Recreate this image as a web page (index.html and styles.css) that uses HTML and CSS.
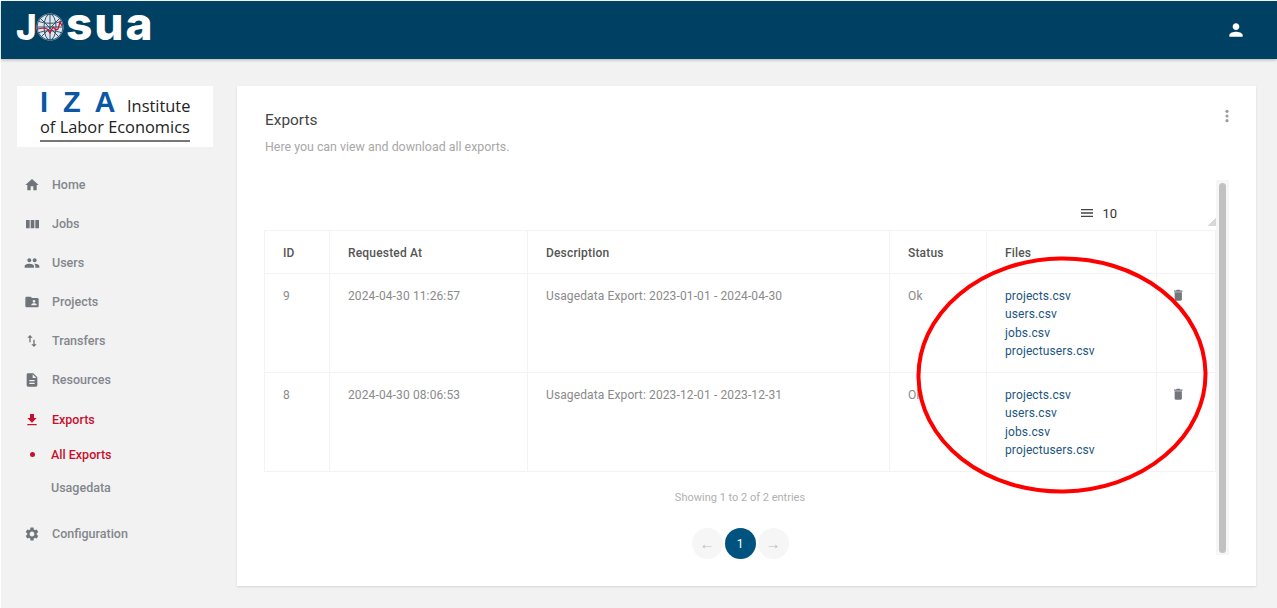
FILE: index.html
```html
<!DOCTYPE html>
<html lang="en">
<head>
<meta charset="utf-8">
<title>Exports</title>
<link rel="stylesheet" href="styles.css">
</head>
<body>
<header class="topbar">
  <div class="brand">
    <span class="brand-j">J</span>
    <svg class="globe" viewBox="0 0 28 28" fill="none">
      <circle cx="14" cy="14" r="13.5" fill="#dfe6eb"/>
      <g stroke="#2f5570" stroke-width="1">
        <circle cx="14" cy="14" r="13"/>
        <ellipse cx="14" cy="14" rx="6" ry="13"/>
        <path d="M14 1v26M2 8c7 3 17 3 24 0M1 14h26M2 20c7-3 17-3 24 0"/>
        <path d="M4 5l19 19M24 5L5 24"/>
      </g>
      <path d="M1 16l7-1 3 1 3 4 3-6 3 3 2-1 2-7 2 4" stroke="#c8102e" stroke-width="1.2"/>
    </svg>
    <span class="brand-rest">sua</span>
  </div>
  <svg class="user-icon" viewBox="0 0 24 24"><path d="M12 12c2.21 0 4-1.79 4-4s-1.79-4-4-4-4 1.79-4 4 1.79 4 4 4zm0 2c-2.67 0-8 1.34-8 4v2h16v-2c0-2.66-5.33-4-8-4z"/></svg>
</header>

<div class="layout">
  <aside class="sidebar">
    <div class="iza">
      <div class="iza-top"><span class="iza-mark">I Z A</span><span class="iza-word">Institute</span></div>
      <div class="iza-word iza-second">of Labor Economics</div>
      <div class="iza-rule"></div>
    </div>
    <nav class="nav">
      <a class="nav-item"><svg viewBox="0 0 24 24"><path d="M10 20v-6h4v6h5v-8h3L12 3 2 12h3v8z"/></svg>Home</a>
      <a class="nav-item"><svg viewBox="0 0 24 24"><path d="M3 6h5.5v12.5H3zM10 6h5.5v12.5H10zM17 6h5.5v12.5H17z"/></svg>Jobs</a>
      <a class="nav-item"><svg viewBox="0 0 24 24"><path d="M16 11c1.66 0 2.99-1.34 2.99-3S17.66 5 16 5c-1.66 0-3 1.34-3 3s1.34 3 3 3zm-8 0c1.66 0 2.99-1.34 2.99-3S9.66 5 8 5C6.34 5 5 6.34 5 8s1.34 3 3 3zm0 2c-2.33 0-7 1.17-7 3.5V19h14v-2.5c0-2.33-4.67-3.5-7-3.5zm8 0c-.29 0-.62.02-.97.05 1.16.84 1.97 1.97 1.97 3.45V19h6v-2.5c0-2.33-4.67-3.5-7-3.5z"/></svg>Users</a>
      <a class="nav-item"><svg viewBox="0 0 24 24"><path d="M20 6h-8l-2-2H4c-1.1 0-1.99.9-1.99 2L2 18c0 1.1.9 2 2 2h16c1.1 0 2-.9 2-2V8c0-1.1-.9-2-2-2zm-5 3c1.1 0 2 .9 2 2s-.9 2-2 2-2-.9-2-2 .9-2 2-2zm4 8h-8v-1c0-1.33 2.67-2 4-2s4 .67 4 2v1z"/></svg>Projects</a>
      <a class="nav-item"><svg viewBox="0 0 24 24"><path d="M16 17.01V10h-2v7.01h-3L15 21l4-3.99h-3zM9 3L5 6.99h3V14h2V6.99h3L9 3z"/></svg>Transfers</a>
      <a class="nav-item"><svg viewBox="0 0 24 24"><path d="M14 2H6c-1.1 0-1.99.9-1.99 2L4 20c0 1.1.89 2 1.99 2H18c1.1 0 2-.9 2-2V8l-6-6zm2 16H8v-2h8v2zm0-4H8v-2h8v2zm-3-5V3.5L18.5 9H13z"/></svg>Resources</a>
      <a class="nav-item is-active"><svg viewBox="0 0 24 24"><path d="M19 9h-4V3H9v6H5l7 7 7-7zM5 18v2h14v-2H5z"/></svg>Exports</a>
      <div class="subnav">
        <a class="sub-item is-active"><span class="dot"></span>All Exports</a>
        <a class="sub-item">Usagedata</a>
      </div>
      <a class="nav-item"><svg viewBox="0 0 24 24"><path d="M19.14 12.94c.04-.3.06-.61.06-.94 0-.32-.02-.64-.07-.94l2.03-1.58c.18-.14.23-.41.12-.61l-1.92-3.32c-.12-.22-.37-.29-.59-.22l-2.39.96c-.5-.38-1.03-.7-1.62-.94l-.36-2.54c-.04-.24-.24-.41-.48-.41h-3.84c-.24 0-.43.17-.47.41l-.36 2.54c-.59.24-1.13.57-1.62.94l-2.39-.96c-.22-.08-.47 0-.59.22L2.74 8.87c-.12.21-.08.47.12.61l2.03 1.58c-.05.3-.09.63-.09.94s.02.64.07.94l-2.03 1.58c-.18.14-.23.41-.12.61l1.92 3.32c.12.22.37.29.59.22l2.39-.96c.5.38 1.03.7 1.62.94l.36 2.54c.05.24.24.41.48.41h3.84c.24 0 .44-.17.47-.41l.36-2.54c.59-.24 1.13-.56 1.62-.94l2.39.96c.22.08.47 0 .59-.22l1.92-3.32c.12-.22.07-.47-.12-.61l-2.01-1.58zM12 15.6c-1.98 0-3.6-1.62-3.6-3.6s1.62-3.6 3.6-3.6 3.6 1.62 3.6 3.6-1.62 3.6-3.6 3.6z"/></svg>Configuration</a>
    </nav>
  </aside>

  <main class="card">
    <div class="card-head">
      <div>
        <h1 class="card-title">Exports</h1>
        <p class="card-sub">Here you can view and download all exports.</p>
      </div>
      <svg class="kebab" viewBox="0 0 24 24"><circle cx="12" cy="5" r="2.4"/><circle cx="12" cy="12" r="2.4"/><circle cx="12" cy="19" r="2.4"/></svg>
    </div>
    <div class="scroll">
      <div class="scroll-body">
        <div class="toolbar">
          <svg class="menu-icon" viewBox="0 0 24 24"><path d="M3 18h18v-2H3v2zm0-5h18v-2H3v2zm0-7v2h18V6H3z"/></svg>
          <span class="per-page">10</span>
          <span class="resizer"></span>
        </div>
        <table class="grid">
          <thead>
            <tr>
              <th class="c-id">ID</th>
              <th class="c-req">Requested At</th>
              <th class="c-desc">Description</th>
              <th class="c-status">Status</th>
              <th class="c-files">Files</th>
              <th class="c-act"></th>
            </tr>
          </thead>
          <tbody>
            <tr>
              <td>9</td>
              <td>2024-04-30 11:26:57</td>
              <td>Usagedata Export: 2023-01-01 - 2024-04-30</td>
              <td>Ok</td>
              <td><a>projects.csv</a><a>users.csv</a><a>jobs.csv</a><a>projectusers.csv</a></td>
              <td><svg class="trash" viewBox="0 0 24 24"><path d="M6 19c0 1.1.9 2 2 2h8c1.1 0 2-.9 2-2V7H6v12zM19 4h-3.5l-1-1h-5l-1 1H5v2h14V4z"/></svg></td>
            </tr>
            <tr>
              <td>8</td>
              <td>2024-04-30 08:06:53</td>
              <td>Usagedata Export: 2023-12-01 - 2023-12-31</td>
              <td>Ok</td>
              <td><a>projects.csv</a><a>users.csv</a><a>jobs.csv</a><a>projectusers.csv</a></td>
              <td><svg class="trash" viewBox="0 0 24 24"><path d="M6 19c0 1.1.9 2 2 2h8c1.1 0 2-.9 2-2V7H6v12zM19 4h-3.5l-1-1h-5l-1 1H5v2h14V4z"/></svg></td>
            </tr>
          </tbody>
        </table>
        <p class="info">Showing 1 to 2 of 2 entries</p>
        <div class="pager">
          <span class="page-btn">←</span>
          <span class="page-btn is-current">1</span>
          <span class="page-btn">→</span>
        </div>
      </div>
      <div class="scrollbar"><div class="thumb"></div></div>
    </div>
  </main>
</div>

<svg class="annotation" viewBox="0 0 300 246" fill="none"><ellipse cx="150" cy="123" rx="143.5" ry="116.5" stroke="#f00" stroke-width="4" transform="rotate(-1 150 123)"/></svg>
</body>
</html>
```
FILE: styles.css
```css
* { box-sizing: border-box; }
html, body { height: 100%; }
body {
  margin: 0;
  padding: 1px 0 0 1px;
  height: 608px;
  overflow: hidden;
  background: #fff;
  font-family: Roboto, "Liberation Sans", sans-serif;
  font-size: 12px;
  color: #8a8a8a;
  position: relative;
}
a { display: block; }

.topbar {
  height: 58px;
  background: #004063;
  display: flex;
  align-items: center;
  justify-content: space-between;
  padding: 0 31px 0 15px;
  box-shadow: 0 1px 3px rgba(0, 0, 0, .25);
  position: relative;
}
.brand { display: flex; align-items: center; color: #fff; height: 40px; margin-top: -6px; }
.brand-j { font: 800 35px/1 Inter, sans-serif; width: 20px; }
.globe { width: 28px; height: 28px; }
.brand-rest {
  font: 800 46px/48px Inter, sans-serif;
  letter-spacing: 2px;
  margin: -9px 0 0 2px;
}
.user-icon { width: 20px; height: 20px; fill: #fff; }

.layout { display: flex; padding-top: 27px; height: 549px; background: #f2f2f2; }
.sidebar { width: 236px; padding-left: 16px; flex: none; }

.iza {
  width: 196px;
  height: 61px;
  background: #fff;
  padding: 1px 23px 0;
  font-family: "Open Sans", sans-serif;
}
.iza-top { display: flex; align-items: baseline; height: 30px; }
.iza-mark {
  font: 700 29px/30px "Liberation Sans", sans-serif;
  color: #0b57a4;
  letter-spacing: 3.4px;
  white-space: nowrap;
  width: 87px;
  flex: none;
}
.iza-word { font-size: 16.4px; line-height: 20px; color: #222; white-space: nowrap; }
.iza-rule { height: 2px; background: #777; margin-top: 3px; }

.nav { padding-top: 18px; }
.nav-item {
  display: flex;
  align-items: center;
  height: 39px;
  padding-left: 7px;
  gap: 12px;
  font-size: 12.5px;
  font-weight: 500;
  color: #83878d;
}
.nav-item svg { width: 16px; height: 16px; fill: #6f747b; flex: none; }
.nav-item.is-active { color: #c8102e; padding-top: 2px; }
.nav-item.is-active svg { fill: #c8102e; }
.subnav { padding-bottom: 10px; }
.sub-item {
  display: flex;
  align-items: center;
  height: 33px;
  padding-left: 34px;
  position: relative;
  font-size: 12.5px;
  font-weight: 500;
  color: #83878d;
}
.sub-item.is-active { color: #c8102e; }
.dot {
  width: 5px;
  height: 5px;
  border-radius: 50%;
  background: #c8102e;
  position: absolute;
  left: 13px;
  top: 14px;
}

.card {
  width: 1019px;
  height: 500px;
  background: #fff;
  box-shadow: 0 1px 2px rgba(0, 0, 0, .12);
  padding: 24px 27px 0;
}
.card-head { display: flex; justify-content: space-between; height: 70px; padding-left: 1px; }
.card-title { margin: 0; font-size: 15.4px; line-height: 20px; font-weight: 400; color: #444; }
.card-sub { margin: 9px 0 0; font-size: 12.4px; line-height: 16px; color: #a8a8a8; }
.kebab { width: 16px; height: 16px; fill: #9a9ea3; margin: -2px -6px 0 0; }

.scroll { display: flex; width: 965px; height: 375px; }
.scroll-body { width: 952px; flex: none; }
.scrollbar { width: 13px; background: #f6f6f6; padding: 3px; flex: none; }
.thumb { height: 370px; width: 7px; border-radius: 4px; background: #c1c1c1; }

.toolbar {
  height: 50px;
  display: flex;
  align-items: center;
  justify-content: flex-end;
  padding: 16px 99px 0 0;
  position: relative;
}
.menu-icon { width: 16px; height: 16px; fill: #444; margin-right: 7px; }
.per-page { font-size: 13px; color: #333; }
.resizer {
  position: absolute;
  right: 0;
  bottom: 4px;
  width: 8px;
  height: 8px;
  background: linear-gradient(135deg, transparent 50%, #d8d8d8 50%);
}

.grid { border-collapse: collapse; table-layout: fixed; width: 951px; }
.grid th, .grid td { border: 1px solid #f3f3f3; padding: 0 18px; text-align: left; vertical-align: top; }
.grid th { height: 43px; padding-top: 2px; vertical-align: middle; font-weight: 500; color: #555; letter-spacing: .015em; }
.grid td { height: 99px; padding-top: 13px; line-height: 18.3px; padding-bottom: 0; letter-spacing: .01em; }
.c-id { width: 65px; }
.c-req { width: 198px; }
.c-desc { width: 362px; }
.c-status { width: 97px; }
.c-files { width: 170px; }
.c-act { width: 59px; }
.grid a { color: #1c5680; }
.trash { width: 14.5px; height: 14.5px; fill: #73777d; margin: 1px 0 0 -4px; display: block; }

.info { margin: 19px 0 0; text-align: center; font-size: 11px; line-height: 14px; color: #b0b0b0; }
.pager { display: flex; justify-content: center; gap: 2px; margin-top: 23px; }
.page-btn {
  width: 31px;
  height: 31px;
  border-radius: 50%;
  background: #f6f6f6;
  color: #bdbdbd;
  display: flex;
  align-items: center;
  justify-content: center;
  font-size: 15px;
}
.page-btn.is-current { background: #00537f; color: #fff; font-size: 12px; }

.annotation {
  position: absolute;
  left: 912px;
  top: 252px;
  width: 300px;
  height: 246px;
}
```
